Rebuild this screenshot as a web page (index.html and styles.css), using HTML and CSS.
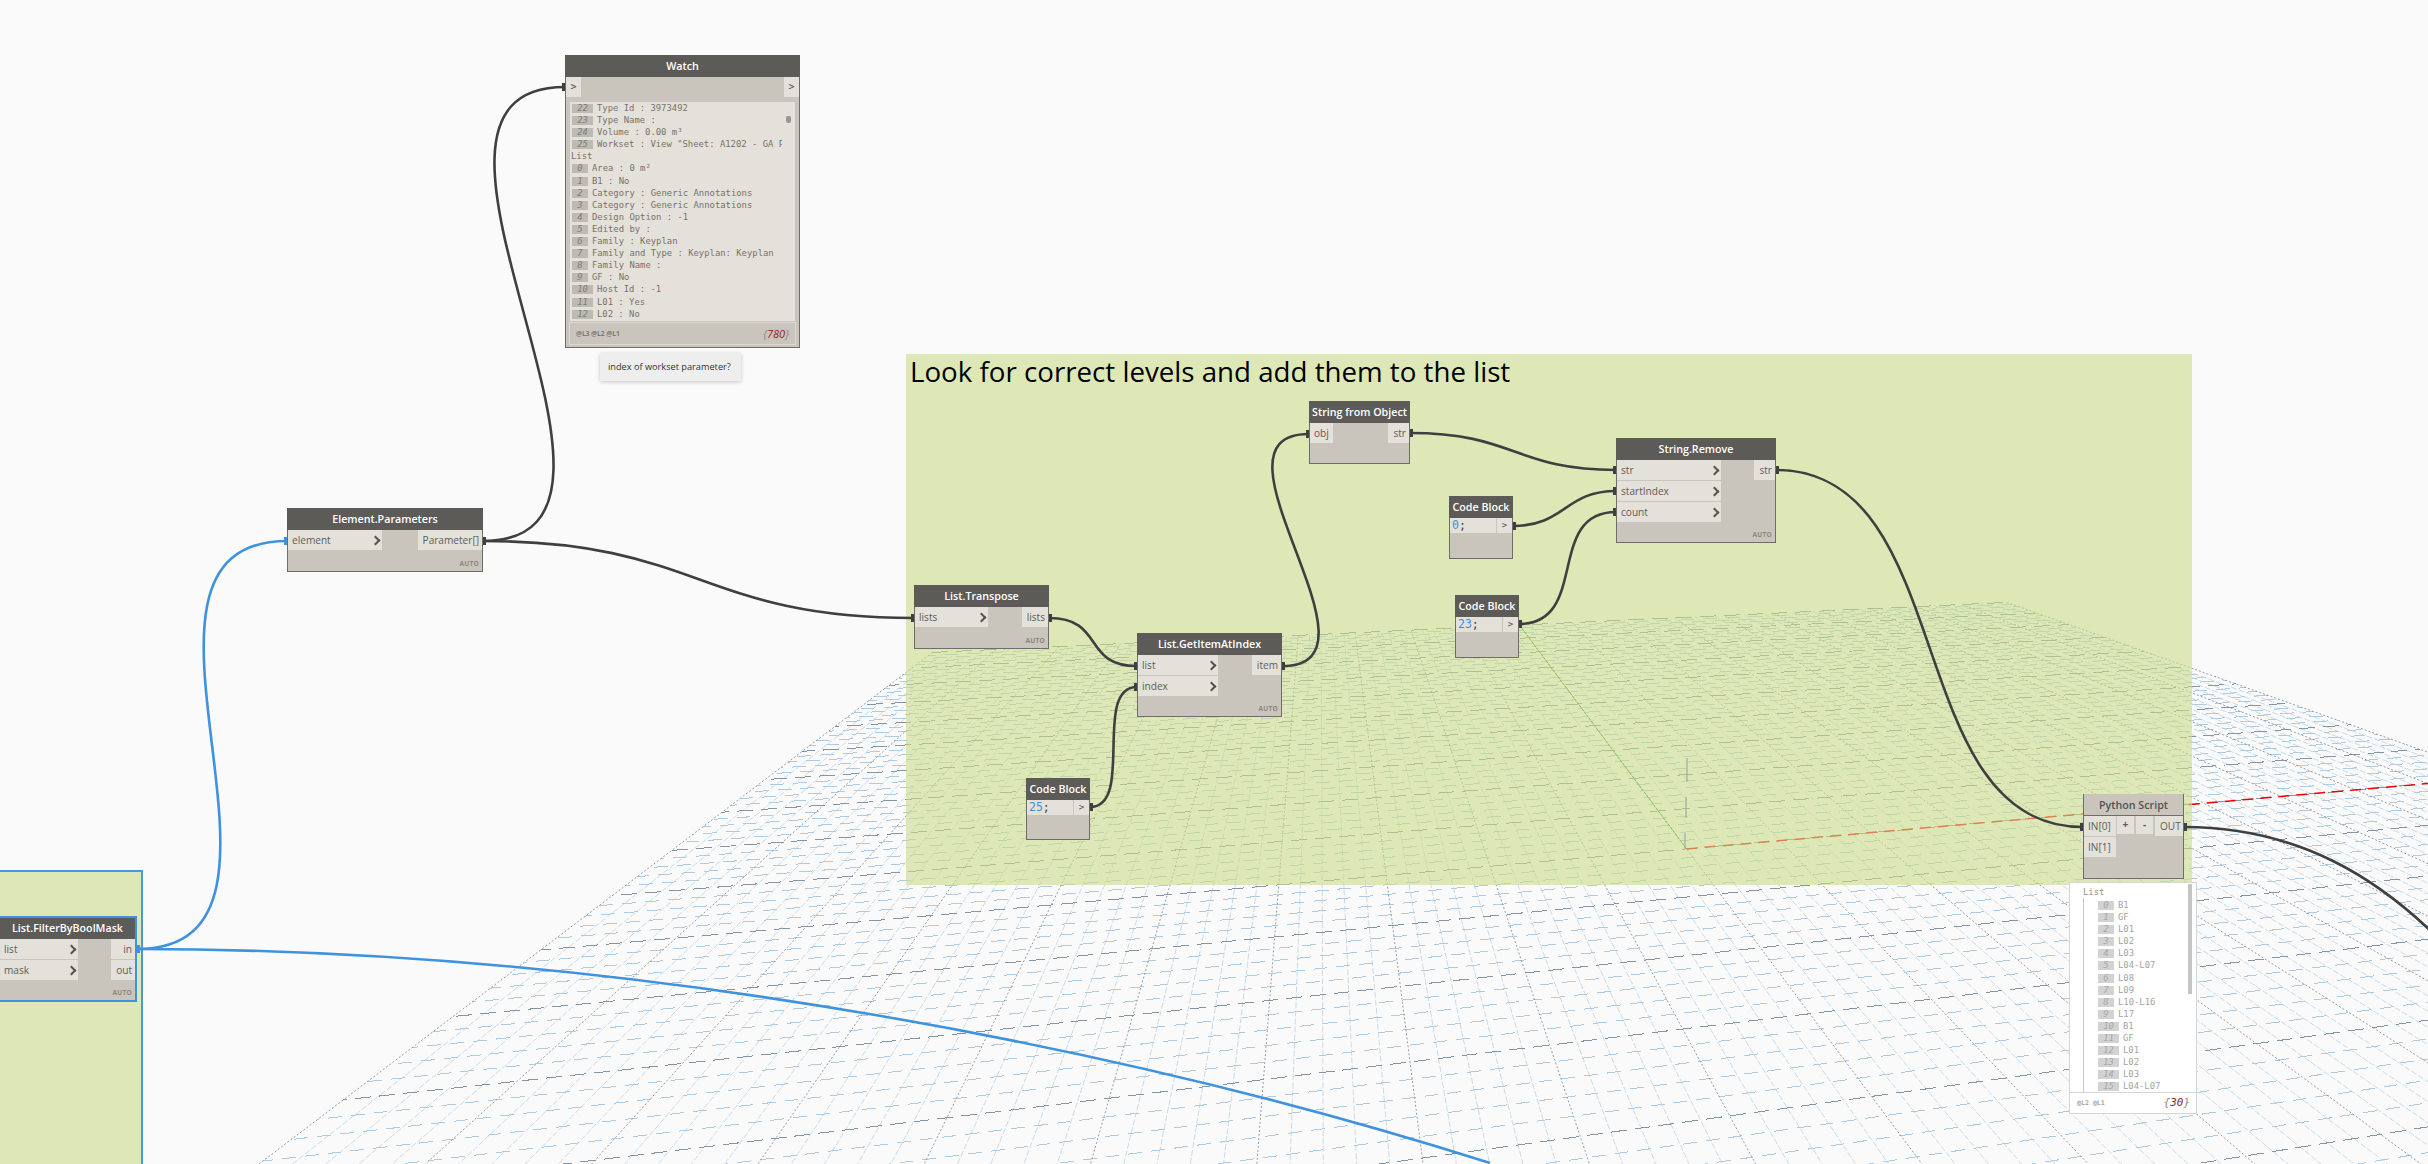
FILE: index.html
```html
<!DOCTYPE html>
<html lang="en">
<head>
<meta charset="utf-8">
<title>Dynamo graph</title>
<link rel="stylesheet" href="styles.css">
</head>
<body>
<main class="canvas">
  <svg id="grid" class="layer" width="2428" height="1164" viewBox="0 0 2428 1164"></svg>

  <section class="group group-main"><h2 class="group-title">Look for correct levels and add them to the list</h2></section>
  <section class="group group-left"></section>

  <svg class="layer" width="2428" height="1164" viewBox="0 0 2428 1164">
    <g class="wire">
      <path d="M483 541 C688 541 360 87 565 87"/>
      <path d="M483 541 C700 541 700 618 914 618"/>
      <path d="M1049 618 C1105 618 1082 666 1137 666"/>
      <path d="M1282 666 C1397 666 1194 434 1309 434"/>
      <path d="M1090 807 C1135 807 1092 687 1137 687"/>
      <path d="M1410 433 C1515 433 1515 470 1616 470"/>
      <path d="M1513 526 C1565 526 1565 491 1616 491"/>
      <path d="M1519 624 C1590 624 1545 512 1616 512"/>
      <path d="M1776 470 C1960 470 1900 827 2083 827"/>
      <path d="M2184 827 C2300 827 2380 880 2440 940"/>
    </g>
    <g class="wire-blue">
      <path d="M137 949 C337 949 87 541 287 541"/>
      <path d="M137 949 C650 949 1150 1055 1490 1163"/>
    </g>
    <g class="tabs">
      <rect x="562" y="83" width="3" height="8"/>
      <rect x="483" y="537" width="3" height="8"/>
      <rect x="911" y="614" width="3" height="8"/>
      <rect x="1049" y="614" width="3" height="8"/>
      <rect x="1134" y="662" width="3" height="8"/>
      <rect x="1134" y="683" width="3" height="8"/>
      <rect x="1282" y="662" width="3" height="8"/>
      <rect x="1306" y="430" width="3" height="8"/>
      <rect x="1410" y="429" width="3" height="8"/>
      <rect x="1613" y="466" width="3" height="8"/>
      <rect x="1613" y="487" width="3" height="8"/>
      <rect x="1613" y="508" width="3" height="8"/>
      <rect x="1513" y="522" width="3" height="8"/>
      <rect x="1519" y="620" width="3" height="8"/>
      <rect x="1090" y="803" width="3" height="8"/>
      <rect x="1776" y="466" width="3" height="8"/>
      <rect x="2080" y="823" width="3" height="8"/>
      <rect x="2184" y="823" width="3" height="8"/>
    </g>
    <g class="tabs-blue">
      <rect x="284" y="537" width="3" height="8"/>
      <rect x="137" y="945" width="3" height="8"/>
    </g>
  </svg>

  <article class="node n-watch">
    <header class="head">Watch</header>
    <div class="watch-ports"><span class="mono-port">&gt;</span><span class="mono-port">&gt;</span></div>
    <div class="watch-list">
      <div class="row r2"><span class="idx">22</span><span>Type Id : 3973492</span></div>
      <div class="row r2"><span class="idx">23</span><span>Type Name :</span></div>
      <div class="row r2"><span class="idx">24</span><span>Volume : 0.00 m³</span></div>
      <div class="row r2"><span class="idx">25</span><span class="clip">Workset : View "Sheet: A1202 - GA Plan</span></div>
      <div class="row list-label">List</div>
      <div class="row"><span class="idx">0</span><span>Area : 0 m²</span></div>
      <div class="row"><span class="idx">1</span><span>B1 : No</span></div>
      <div class="row"><span class="idx">2</span><span>Category : Generic Annotations</span></div>
      <div class="row"><span class="idx">3</span><span>Category : Generic Annotations</span></div>
      <div class="row"><span class="idx">4</span><span>Design Option : -1</span></div>
      <div class="row"><span class="idx">5</span><span>Edited by :</span></div>
      <div class="row"><span class="idx">6</span><span>Family : Keyplan</span></div>
      <div class="row"><span class="idx">7</span><span>Family and Type : Keyplan: Keyplan</span></div>
      <div class="row"><span class="idx">8</span><span>Family Name :</span></div>
      <div class="row"><span class="idx">9</span><span>GF : No</span></div>
      <div class="row r2"><span class="idx">10</span><span>Host Id : -1</span></div>
      <div class="row r2"><span class="idx">11</span><span>L01 : Yes</span></div>
      <div class="row r2"><span class="idx">12</span><span>L02 : No</span></div>
      <i class="thumb-dot"></i>
    </div>
    <footer class="watch-foot"><span class="levels">@L3 @L2 @L1</span><span class="count">{<b>780</b>}</span></footer>
  </article>
  <aside class="note">index of workset parameter?</aside>

  <article class="node n-params">
    <header class="head">Element.Parameters</header>
    <div class="ports">
      <div class="col"><div class="port in w94">element</div></div>
      <div class="col"><div class="port out">Parameter[]</div></div>
    </div>
    <footer class="auto">AUTO</footer>
  </article>

  <article class="node n-mask selected">
    <header class="head">List.FilterByBoolMask</header>
    <div class="ports">
      <div class="col"><div class="port in w78">list</div><div class="port in w78">mask</div></div>
      <div class="col"><div class="port out">in</div><div class="port out">out</div></div>
    </div>
    <footer class="auto">AUTO</footer>
  </article>

  <article class="node n-transpose">
    <header class="head">List.Transpose</header>
    <div class="ports">
      <div class="col"><div class="port in w73">lists</div></div>
      <div class="col"><div class="port out">lists</div></div>
    </div>
    <footer class="auto">AUTO</footer>
  </article>

  <article class="node n-getitem">
    <header class="head">List.GetItemAtIndex</header>
    <div class="ports">
      <div class="col"><div class="port in w80">list</div><div class="port in w80">index</div></div>
      <div class="col"><div class="port out">item</div></div>
    </div>
    <footer class="auto">AUTO</footer>
  </article>

  <article class="node n-string">
    <header class="head">String from Object</header>
    <div class="ports">
      <div class="col"><div class="port plain">obj</div></div>
      <div class="col"><div class="port out">str</div></div>
    </div>
  </article>

  <article class="node n-remove">
    <header class="head">String.Remove</header>
    <div class="ports">
      <div class="col"><div class="port in w104">str</div><div class="port in w104">startIndex</div><div class="port in w104">count</div></div>
      <div class="col"><div class="port out">str</div></div>
    </div>
    <footer class="auto">AUTO</footer>
  </article>

  <article class="node code n-code0">
    <header class="head">Code Block</header>
    <div class="code-row"><span class="code-text"><span class="num">0</span>;</span><span class="code-out">&gt;</span></div>
  </article>
  <article class="node code n-code23">
    <header class="head">Code Block</header>
    <div class="code-row"><span class="code-text"><span class="num">23</span>;</span><span class="code-out">&gt;</span></div>
  </article>
  <article class="node code n-code25">
    <header class="head">Code Block</header>
    <div class="code-row"><span class="code-text"><span class="num">25</span>;</span><span class="code-out">&gt;</span></div>
  </article>

  <article class="node n-python">
    <header class="head head-light">Python Script</header>
    <div class="py-ports">
      <div class="col"><div class="port plain py-in">IN[0]</div><div class="port plain py-in">IN[1]</div></div>
      <div class="py-btn">+</div><div class="py-btn">-</div>
      <div class="port plain py-out">OUT</div>
    </div>
  </article>

  <aside class="preview">
    <div class="pv-label">List</div>
    <div class="pv-list">
      <div class="pv-row"><span class="pv-idx">0</span><span>B1</span></div>
      <div class="pv-row"><span class="pv-idx">1</span><span>GF</span></div>
      <div class="pv-row"><span class="pv-idx">2</span><span>L01</span></div>
      <div class="pv-row"><span class="pv-idx">3</span><span>L02</span></div>
      <div class="pv-row"><span class="pv-idx">4</span><span>L03</span></div>
      <div class="pv-row"><span class="pv-idx">5</span><span>L04-L07</span></div>
      <div class="pv-row"><span class="pv-idx">6</span><span>L08</span></div>
      <div class="pv-row"><span class="pv-idx">7</span><span>L09</span></div>
      <div class="pv-row"><span class="pv-idx">8</span><span>L10-L16</span></div>
      <div class="pv-row"><span class="pv-idx">9</span><span>L17</span></div>
      <div class="pv-row pv2"><span class="pv-idx">10</span><span>B1</span></div>
      <div class="pv-row pv2"><span class="pv-idx">11</span><span>GF</span></div>
      <div class="pv-row pv2"><span class="pv-idx">12</span><span>L01</span></div>
      <div class="pv-row pv2"><span class="pv-idx">13</span><span>L02</span></div>
      <div class="pv-row pv2"><span class="pv-idx">14</span><span>L03</span></div>
      <div class="pv-row pv2"><span class="pv-idx">15</span><span>L04-L07</span></div>
    </div>
    <i class="pv-scroll"></i>
    <footer class="pv-foot"><span class="levels">@L2 @L1</span><span class="count">{<b>30</b>}</span></footer>
  </aside>
</main>
<script src="grid.js"></script>
</body>
</html>
```
FILE: styles.css
```css
* { box-sizing: border-box; }
html, body { margin: 0; padding: 0; }
body { width: 2428px; height: 1164px; overflow: hidden; background: #fafafa; font-family: "Open Sans", "Noto Sans", sans-serif; }

.canvas { position: relative; width: 2428px; height: 1164px; overflow: hidden; background: #fafafa; }
.layer { position: absolute; left: 0; top: 0; display: block; }

/* Background grid */
.g-b { stroke: #aecbe1; stroke-width: 1; stroke-dasharray: 14 9; shape-rendering: crispEdges; }
.g-b.major { stroke: #8495a6; stroke-dasharray: 16 8; }
.g-a { stroke: #bcd3e4; stroke-width: .8; stroke-dasharray: 6 2; }
.g-a.major { stroke: #7b8793; stroke-width: .8; stroke-dasharray: 2 2; }
.axis-x { stroke: #f00000; stroke-width: 1.5; stroke-dasharray: 11 7; }
.axis-y { stroke: #2f9a1c; stroke-width: 1; stroke-dasharray: 3 1; }
.axis-z { stroke: #3949c4; stroke-width: 1; }

/* Groups */
.group { position: absolute; background: rgba(202, 220, 137, .6); }
.group-main { left: 906px; top: 354px; width: 1286px; height: 531px; }
.group-left { left: -4px; top: 870px; width: 147px; height: 300px; border: 2px solid #4b97dd; }
.group-title { margin: 0; padding: 0 0 0 4px; font: 400 27.7px/35px "Open Sans", sans-serif; color: #000; white-space: nowrap; }

/* Wires */
.wire path { fill: none; stroke: #3f3f3f; stroke-width: 2.6; }
.wire-blue path { fill: none; stroke: #3f92de; stroke-width: 2.6; }
.tabs rect { fill: #3f3f3f; }
.tabs-blue rect { fill: #3f92de; }

/* Nodes */
.node { position: absolute; display: flex; flex-direction: column; background: #c9c5bd; border: 1px solid #6f6d69; color: #5f5c58; font-size: 10.1px; }
.node.selected { border: 2px solid #3f92de; }
.head { flex: none; height: 22px; margin: -1px -1px 0; background: #5d5b58; color: #fff; font-size: 10.7px; font-weight: 600; line-height: 22px; text-align: center; white-space: nowrap; }
.selected .head { height: 21px; margin: 0; line-height: 21px; }
.head-light { margin: -1px 0 0; background: #c9c5bd; color: #55524e; border-bottom: 1px solid #6f6d69; }
.ports { display: flex; justify-content: space-between; }
.col { display: flex; flex-direction: column; gap: 1px; }
.port { position: relative; height: 20px; padding: 0 4px; background: #e4e1db; line-height: 20px; white-space: nowrap; }
.port.in::after { content: ""; position: absolute; right: 3px; top: 7px; width: 5px; height: 5px; border-top: 2px solid #57534f; border-right: 2px solid #57534f; transform: rotate(45deg); }
.port.out { padding: 0 3px 0 5px; text-align: right; }
.w73 { width: 73px; } .w78 { width: 78px; } .w80 { width: 80px; } .w94 { width: 94px; } .w104 { width: 104px; }
.auto { margin-top: auto; padding: 0 3px 3px 0; font-size: 6.6px; font-weight: 700; line-height: 9px; text-align: right; color: #8b8781; letter-spacing: .2px; }

.n-watch { left: 565px; top: 55px; width: 235px; height: 293px; }
.n-params { left: 287px; top: 508px; width: 196px; height: 64px; }
.n-mask { left: -2px; top: 916px; width: 139px; height: 86px; }
.n-transpose { left: 914px; top: 585px; width: 135px; height: 64px; }
.n-getitem { left: 1137px; top: 633px; width: 145px; height: 84px; }
.n-string { left: 1309px; top: 401px; width: 101px; height: 63px; }
.n-remove { left: 1616px; top: 438px; width: 160px; height: 105px; }
.n-code0 { left: 1449px; top: 496px; width: 64px; height: 63px; }
.n-code23 { left: 1455px; top: 595px; width: 64px; height: 63px; }
.n-code25 { left: 1026px; top: 778px; width: 64px; height: 62px; }
.n-python { left: 2083px; top: 794px; width: 101px; height: 85px; }

/* Code block */
.code-row { display: flex; height: 15px; background: #e4e1db; font: 11.5px/15px "DejaVu Sans Mono", monospace; }
.code-text { flex: 1; padding-left: 2px; color: #45423f; }
.num { color: #3a8fe0; }
.code-out { flex: none; width: 16px; border-left: 1px solid #c9c5bd; text-align: center; font-size: 9px; color: #55524e; }

/* Python */
.py-ports { display: flex; gap: 1px; align-items: flex-start; }
.py-in { width: 32px; padding: 0 0 0 4px; }
.py-btn { width: 17px; height: 18px; margin-right: 1px; background: #e4e1db; text-align: center; line-height: 17px; font-weight: 700; }
.py-out { flex: 1; padding: 0 0 0 5px; }

/* Watch */
.watch-ports { display: flex; flex: none; justify-content: space-between; height: 20px; }
.mono-port { width: 15px; background: #e4e1db; text-align: center; font: 10px/20px "DejaVu Sans Mono", monospace; color: #4f4c48; }
.watch-list { position: relative; flex: 1; margin: 5px 4px 0; overflow: hidden; background: #e4e1da; font: 8.9px/12.1px "DejaVu Sans Mono", monospace; color: #76726c; }
.row { display: flex; gap: 4px; height: 12.1px; padding-left: 2px; white-space: nowrap; }
.idx { flex: none; width: 16px; height: 9px; margin-top: 2px; background: #bdbab3; font-style: italic; line-height: 9px; text-align: center; color: #807c76; }
.r2 .idx { width: 21px; }
.clip { display: block; width: 185px; overflow: hidden; }
.list-label { padding-left: 1px; }
.thumb-dot { position: absolute; right: 4px; top: 14px; width: 5px; height: 7px; border-radius: 2px; background: #99968f; }
.watch-foot { display: flex; flex: none; justify-content: space-between; align-items: center; height: 23px; margin: 1px 3px 2px; padding: 0 6px; border: 1px solid #dcd9d2; }
.levels { font-size: 6.6px; font-weight: 700; color: #7b7873; }
.count { font-size: 11px; font-style: italic; color: #8a8680; }
.count b { font-weight: 400; color: #8a1f1f; }

.note { position: absolute; left: 600px; top: 353px; width: 141px; height: 28px; padding-left: 8px; background: #eeeeee; box-shadow: 0 1px 4px rgba(0, 0, 0, .22); font-size: 9.2px; line-height: 27px; color: #333; white-space: nowrap; }

/* Preview bubble */
.preview { position: absolute; left: 2069px; top: 882px; width: 128px; height: 232px; display: flex; flex-direction: column; background: #fff; border: 1px solid #d6d6d6; font: 8.9px/12px "DejaVu Sans Mono", monospace; color: #a3a3a3; }
.pv-label { height: 11px; margin: 4px 0 0 13px; line-height: 11px; color: #9c8f8f; }
.pv-list { flex: 1; margin-left: 13px; padding: 1px 0 0 14px; border-left: 1px solid #c8c8c8; overflow: hidden; }
.pv-row { display: flex; gap: 4px; height: 12.1px; white-space: nowrap; }
.pv-idx { flex: none; width: 16px; height: 9px; margin-top: 2px; background: #d2d2d2; font-style: italic; line-height: 9px; text-align: center; color: #a8a8a8; }
.pv2 .pv-idx { width: 21px; }
.pv-scroll { position: absolute; right: 4px; top: 1px; width: 4px; height: 110px; background: #c4c4c4; }
.pv-foot { display: flex; flex: none; justify-content: space-between; align-items: center; height: 21px; padding: 0 6px 0 7px; border-top: 1px solid #d6d6d6; }
.pv-foot .levels { color: #a3a3a3; }
```
FILE: grid.js
```js
(function () {
  var NS = "http://www.w3.org/2000/svg";
  var svg = document.getElementById("grid");
  var VA = [1320, 358], VB = [7250, 358], BASE = 1164;
  var LAST_ROW = 95;

  function lineA(k) { return [VA, [259 + 33.26 * k, BASE]]; }
  function lineB(j) { return [VB, [-10045 + 163.2 * j, BASE]]; }

  function meet(l, m) {
    var x1 = l[0][0], y1 = l[0][1], x2 = l[1][0], y2 = l[1][1];
    var x3 = m[0][0], y3 = m[0][1], x4 = m[1][0], y4 = m[1][1];
    var d = (x1 - x2) * (y3 - y4) - (y1 - y2) * (x3 - x4);
    var a = x1 * y2 - y1 * x2, b = x3 * y4 - y3 * x4;
    return [(a * (x3 - x4) - (x1 - x2) * b) / d, (a * (y3 - y4) - (y1 - y2) * b) / d];
  }

  function draw(p, q, cls, offset) {
    var el = document.createElementNS(NS, "line");
    el.setAttribute("x1", p[0].toFixed(1));
    el.setAttribute("y1", p[1].toFixed(1));
    el.setAttribute("x2", q[0].toFixed(1));
    el.setAttribute("y2", q[1].toFixed(1));
    el.setAttribute("class", cls);
    if (offset) el.setAttribute("stroke-dashoffset", offset);
    svg.appendChild(el);
  }

  function row(j, cls, offset) {
    draw(meet(lineB(j), lineA(0)), meet(lineB(j), lineA(100)), cls, offset);
  }
  function column(k, cls) {
    draw(meet(lineA(k), lineB(0)), meet(lineA(k), lineB(LAST_ROW)), cls);
  }

  var i;
  for (i = 0; i <= 100; i++) {
    if (i % 5) column(i, "g-a");
    if (i % 5 && i <= LAST_ROW) row(i, "g-b", i * 7 % 23);
  }
  for (i = 0; i <= 100; i += 5) {
    column(i, "g-a major");
    if (i <= LAST_ROW) row(i, "g-b major", i * 3 % 24);
  }

  var origin = meet(lineA(50), lineB(50));
  draw(origin, meet(lineB(50), lineA(100)), "axis-x");
  draw(origin, meet(lineA(50), lineB(0)), "axis-y");
  draw([1685, 833], [1685, origin[1]], "axis-z");
  draw([1686, 797], [1686, 818], "axis-z");
  draw([1687, 758], [1687, 782], "axis-z");
})();
```
